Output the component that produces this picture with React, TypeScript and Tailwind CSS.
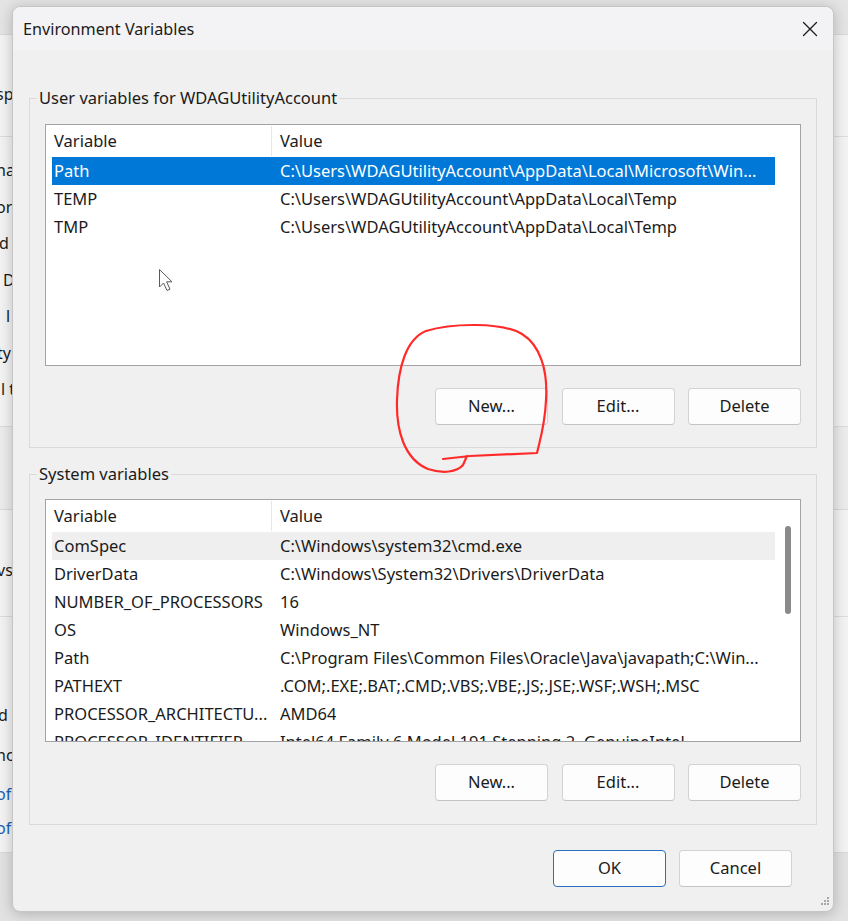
import React from 'react';

const userVars: [string, string][] = [
  ['Path', 'C:\\Users\\WDAGUtilityAccount\\AppData\\Local\\Microsoft\\Win...'],
  ['TEMP', 'C:\\Users\\WDAGUtilityAccount\\AppData\\Local\\Temp'],
  ['TMP', 'C:\\Users\\WDAGUtilityAccount\\AppData\\Local\\Temp'],
];

const systemVars: [string, string][] = [
  ['ComSpec', 'C:\\Windows\\system32\\cmd.exe'],
  ['DriverData', 'C:\\Windows\\System32\\Drivers\\DriverData'],
  ['NUMBER_OF_PROCESSORS', '16'],
  ['OS', 'Windows_NT'],
  ['Path', 'C:\\Program Files\\Common Files\\Oracle\\Java\\javapath;C:\\Win...'],
  ['PATHEXT', '.COM;.EXE;.BAT;.CMD;.VBS;.VBE;.JS;.JSE;.WSF;.WSH;.MSC'],
  ['PROCESSOR_ARCHITECTU...', 'AMD64'],
  ['PROCESSOR_IDENTIFIER', 'Intel64 Family 6 Model 191 Stepping 2, GenuineIntel'],
];

function Row({ name, value, state }: { name: string; value: string; state?: 'selected' | 'hover' }) {
  const bg =
    state === 'selected' ? 'bg-[#0078d7] text-white' : state === 'hover' ? 'bg-[#efefef]' : '';
  return (
    <div className={`flex h-[28px] shrink-0 items-center whitespace-nowrap ${bg}`}>
      <div className="w-[220px] shrink-0 overflow-hidden pl-[2px]">{name}</div>
      <div className="overflow-hidden pl-[8px]">{value}</div>
    </div>
  );
}

function VarList({
  rows,
  selected,
  hover,
  scroll,
  height,
}: {
  rows: [string, string][];
  selected?: number;
  hover?: number;
  scroll?: boolean;
  height: string;
}) {
  return (
    <div className={`flex overflow-hidden border border-[#a3a3a3] bg-white text-[16.5px] ${height}`}>
      <div className="ml-[6px] flex w-[723px] shrink-0 flex-col">
        {/* header */}
        <div className="flex h-[32px] shrink-0 items-center">
          <div className="flex h-[30px] w-[220px] shrink-0 items-center border-r border-[#e6e6e6] pl-[2px]">
            Variable
          </div>
          <div className="pl-[8px]">Value</div>
        </div>
        {rows.map(([n, v], i) => (
          <Row
            key={n + i}
            name={n}
            value={v}
            state={i === selected ? 'selected' : i === hover ? 'hover' : undefined}
          />
        ))}
      </div>
      <div className="flex w-[25px] shrink-0 justify-center pt-[26px]">
        {scroll && <div className="h-[88px] w-[6px] rounded-full bg-[#8a8a8a]" />}
      </div>
    </div>
  );
}

function Btn({ children, primary }: { children: React.ReactNode; primary?: boolean }) {
  return (
    <button
      className={`flex h-[37px] w-[113px] items-center justify-center rounded-[4px] bg-[#fdfdfd] text-[16.5px] text-[#1b1b1b] ${
        primary ? 'border border-[#2a6fc0]' : 'border border-[#d3d3d3] border-b-[#c4c4c4]'
      }`}
    >
      {children}
    </button>
  );
}

function Background() {
  return (
    <div className="flex h-full w-full flex-col whitespace-nowrap text-[16px] text-[#1b1b1b]">
      <div className="h-[35px] shrink-0 border-b border-[#d9d9d9] bg-[#e4e4e4]" />
      <div className="h-[102px] shrink-0 border-b border-[#dcdcdc] bg-[#f3f3f3] pt-[47px]">
        <div className="-ml-[4px] h-[24px] leading-[24px]">sp</div>
      </div>
      <div className="h-[290px] shrink-0 border-b border-[#dcdcdc] bg-[#f3f3f3] pt-[15px]">
        <div className="-ml-[4px] flex h-[36.5px] items-center">na</div>
        <div className="-ml-[4px] flex h-[36.5px] items-center">or</div>
        <div className="-ml-[1px] flex h-[36.5px] items-center">d</div>
        <div className="ml-[3px] flex h-[36.5px] items-center">D</div>
        <div className="ml-[6px] flex h-[36.5px] items-center">l</div>
        <div className="-ml-[3px] flex h-[36.5px] items-center">ty</div>
        <div className="ml-[1px] flex h-[36.5px] items-center">l t</div>
      </div>
      <div className="h-[83px] shrink-0 border-b border-[#d9d9d9] bg-[#ececec]" />
      <div className="h-[107px] shrink-0 border-b border-[#dcdcdc] bg-[#f3f3f3] pt-[48px]">
        <div className="-ml-[3px] h-[24px] leading-[24px]">vs</div>
      </div>
      <div className="h-[236px] shrink-0 border-b border-[#d9d9d9] bg-[#f3f3f3] pt-[78px]">
        <div className="-ml-[2px] flex h-[40px] items-center">d</div>
        <div className="-ml-[4px] flex h-[40px] items-center">nc</div>
        <div className="-ml-[4px] flex h-[38px] items-center text-[#1a5fb4]">of</div>
        <div className="-ml-[4px] flex h-[30px] items-center text-[#1a5fb4]">of</div>
      </div>
      <div className="flex-1 bg-[#e2e2e2]" />
    </div>
  );
}

export default function App() {
  return (
    <div className="relative h-[921px] w-[848px] overflow-hidden bg-[#eeeeee] font-['Noto_Sans','Open_Sans',sans-serif] text-[16px] text-[#1b1b1b]">
      <Background />

      {/* dialog window */}
      <div className="absolute left-[12px] top-[6px] flex h-[906px] w-[822px] flex-col rounded-[8px] border border-[#c6c6c6] bg-[#f0f0f0] shadow-[0_2px_14px_rgba(0,0,0,0.22)]">
        <div className="flex h-[44px] shrink-0 items-center justify-between rounded-t-[8px] bg-[#f3f3f5] pl-[10px] pr-[15px]">
          <span className="text-[16.2px]">Environment Variables</span>
          <svg width="16" height="16" viewBox="0 0 16 16" className="text-[#1b1b1b]">
            <path d="M1.5 1.5 L14.5 14.5 M14.5 1.5 L1.5 14.5" stroke="currentColor" strokeWidth="1.3" strokeLinecap="round" />
          </svg>
        </div>

        <div className="flex flex-col px-[16px]">
          <fieldset className="mt-[36px] border border-[#dadada] px-[15px] pb-[22px] pt-[15px]">
            <legend className="-ml-[8px] px-[2px] text-[16.5px] leading-[22px]">
              User variables for WDAGUtilityAccount
            </legend>
            <VarList rows={userVars} selected={0} height="h-[242px]" />
            <div className="mt-[22px] flex justify-end gap-[13.5px]">
              <Btn>New...</Btn>
              <Btn>Edit...</Btn>
              <Btn>Delete</Btn>
            </div>
          </fieldset>

          <fieldset className="mt-[15px] border border-[#dadada] px-[15px] pb-[23px] pt-[14px]">
            <legend className="-ml-[8px] px-[2px] text-[16.5px] leading-[22px]">System variables</legend>
            <VarList rows={systemVars} hover={0} scroll height="h-[243px]" />
            <div className="mt-[22px] flex justify-end gap-[13.5px]">
              <Btn>New...</Btn>
              <Btn>Edit...</Btn>
              <Btn>Delete</Btn>
            </div>
          </fieldset>
        </div>

        <div className="mt-[25px] flex justify-end gap-[13px] pr-[41px]">
          <Btn primary>OK</Btn>
          <Btn>Cancel</Btn>
        </div>

        {/* resize grip */}
        <svg width="12" height="12" viewBox="0 0 12 12" className="absolute bottom-[3px] right-[3px]">
          <g fill="#a8a8a8">
            <rect x="9" y="1" width="2" height="2" />
            <rect x="6" y="4" width="2" height="2" />
            <rect x="9" y="4" width="2" height="2" />
            <rect x="3" y="7" width="2" height="2" />
            <rect x="6" y="7" width="2" height="2" />
            <rect x="9" y="7" width="2" height="2" />
          </g>
        </svg>
      </div>

      {/* red hand-drawn annotation and mouse pointer on top */}
      <svg className="pointer-events-none absolute left-0 top-0" width="848" height="921" viewBox="0 0 848 921">
        <path
          d="M443 459 L470 456 L537 453 C540 440 545 425 546 400 C548 370 540 345 522 334 C502 322 452 323 426 331 C406 339 398 368 397 400 C396 430 404 459 428 469 C443 474 457 472 463 465 L467 456"
          fill="none"
          stroke="#ff2a2a"
          strokeWidth="2.2"
          strokeLinecap="round"
          strokeLinejoin="round"
        />
        <path
          d="M159.5 269.5 L159.5 287 L163.5 283 L167 290.5 L170 289.2 L166.6 281.8 L172 281.8 Z"
          fill="#ffffff"
          stroke="#5a5a5a"
          strokeWidth="1"
          strokeLinejoin="round"
        />
      </svg>
    </div>
  );
}
